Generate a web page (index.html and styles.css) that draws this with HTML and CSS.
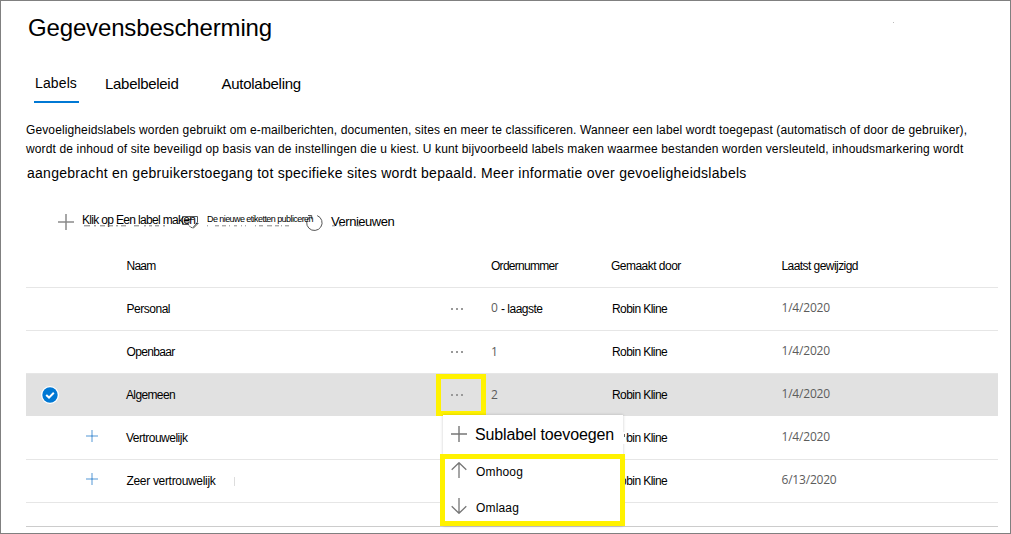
FILE: index.html
```html
<!DOCTYPE html>
<html lang="nl">
<head>
<meta charset="utf-8">
<title>Gegevensbescherming</title>
<link rel="stylesheet" href="styles.css">
</head>
<body>
<main class="page">
  <h1 class="title">Gegevensbescherming</h1>
  <nav class="tabs">
    <a class="tab tab-active">Labels</a>
    <a class="tab tab-policy">Labelbeleid</a>
    <a class="tab tab-auto">Autolabeling</a>
  </nav>
  <section class="intro">
    <p class="intro-line line-one">Gevoeligheidslabels worden gebruikt om e-mailberichten, documenten, sites en meer te classificeren. Wanneer een label wordt toegepast (automatisch of door de gebruiker),</p>
    <p class="intro-line line-two">wordt de inhoud of site beveiligd op basis van de instellingen die u kiest. U kunt bijvoorbeeld labels maken waarmee bestanden worden versleuteld, inhoudsmarkering wordt</p>
    <p class="intro-line line-three">aangebracht en gebruikerstoegang tot specifieke sites wordt bepaald. Meer informatie over gevoeligheidslabels</p>
  </section>
  <div class="toolbar">
    <svg class="tool-icon" width="16" height="16" viewBox="0 0 16 16"><path d="M8 0V16M0 8H16" stroke="#8a8a8a" stroke-width="1.5"/></svg>
    <span class="tool-create">Klik op Een label maken.
      <svg class="residue" width="84" height="2" viewBox="0 0 84 2"><path d="M2 .8H8M12 .8H14M18 .8H23M26 .8H31M34 .8H36M39 .8H44M52 .8H57M62 .8H64M67 .8H70M73 .8H77M81 .8H83" stroke="#777"/></svg>
    </span>
    <svg class="tool-icon" width="17" height="16" viewBox="0 0 17 16"><path d="M7 10.500H.5V2.500H15.500V8M3 5.500H12M3 8H8M7 11.500L9 13.500L10 13.500M10.500 14L15.500 8.500M11 14.500L16.500 9" fill="none" stroke="#555"/></svg>
    <span class="tool-publish">De nieuwe etiketten publiceren
      <svg class="residue" width="84" height="2" viewBox="0 0 84 2"><path d="M0 .8H1M8 .8H12M15 .8H19M22 .8H23M27 .8H30M34 .8H35M38 .8H39M48 .8H49M52 .8H56M60 .8H65M68 .8H72M74 .8H75M78 .8H82" stroke="#888"/></svg>
    </span>
    <svg class="tool-icon" width="17" height="18" viewBox="0 0 17 18"><path d="M11.200 1.600A7.700 7.700 0 1 1 4.200 2.300M2 1.500H5.700V5.200" fill="none" stroke="#555"/></svg>
    <span class="tool-refresh">Vernieuwen
      <svg class="residue" width="52" height="2" viewBox="0 0 52 2"><path d="M1 .8H4M8 .8H12M25 .8H30M43 .8H44" stroke="#888"/></svg>
    </span>
  </div>

  <section class="table">
    <div class="row head">
      <span></span><span></span><span class="t-naam">Naam</span><span></span>
      <span class="t-order">Ordernummer</span><span class="t-maker">Gemaakt door</span><span class="t-mod">Laatst gewijzigd</span>
    </div>
    <div class="row">
      <span></span><span></span><span class="t-personal">Personal</span><span class="dots"><i></i><i></i><i></i></span>
      <span class="order"><b class="num">0</b><span class="t-low">- laagste</span></span><span class="robin">Robin Kline</span><span class="date">1/4/2020</span>
    </div>
    <div class="row">
      <span></span><span></span><span class="t-open">Openbaar</span><span class="dots"><i></i><i></i><i></i></span>
      <span class="order"><b class="num">1</b></span><span class="robin">Robin Kline</span><span class="date">1/4/2020</span>
    </div>
    <div class="row selected">
      <span class="check"><svg width="18" height="18" viewBox="0 0 18 18"><circle cx="9" cy="9" r="9" fill="#fff"/><circle cx="9" cy="9" r="7.700" fill="#0078d4"/><path d="M5.200 9L8 11.600L12.800 6.800" fill="none" stroke="#fff" stroke-width="2"/></svg></span>
      <span></span><span class="t-alg">Algemeen</span><span class="dots"><i></i><i></i><i></i></span>
      <span class="order"><b class="num">2</b></span><span class="robin">Robin Kline</span><span class="date">1/4/2020</span>
    </div>
    <div class="row">
      <span></span><span class="expand"><svg width="12" height="12" viewBox="0 0 12 12"><path d="M6 0V12M0 6H12" stroke="#a9cbea" stroke-width="2"/><path d="M6 5V7" stroke="#69a5dc" stroke-width="2"/></svg></span>
      <span class="t-vert">Vertrouwelijk</span><span></span><span></span><span class="robin">Robin Kline</span><span class="date">1/4/2020</span>
    </div>
    <div class="row">
      <span></span><span class="expand"><svg width="12" height="12" viewBox="0 0 12 12"><path d="M6 0V12M0 6H12" stroke="#a9cbea" stroke-width="2"/><path d="M6 5V7" stroke="#69a5dc" stroke-width="2"/></svg></span>
      <span class="name-cell"><span class="t-zeer">Zeer vertrouwelijk</span><i class="cursor"></i></span><span></span><span></span><span class="robin">Robin Kline</span><span class="date">6/13/2020</span>
    </div>
    <div class="footer-line"></div>
  </section>

  <div class="mark-dots"></div>
  <div class="menu">
    <div class="menu-item menu-add">
      <svg width="16" height="16" viewBox="0 0 16 16"><path d="M8 0V16M0 8H16" stroke="#777" stroke-width="1.400"/></svg>
      <span class="t-sub">Sublabel toevoegen</span>
    </div>
    <div class="menu-marked">
      <div class="menu-item"><svg width="16" height="16" viewBox="0 0 16 16"><path d="M8 16V1M.7 7.700L8 .7L15.300 7.700" fill="none" stroke="#777" stroke-width="1.300"/></svg><span class="t-up">Omhoog</span></div>
      <div class="menu-item"><svg width="16" height="16" viewBox="0 0 16 16"><path d="M8 0V15M.7 8.300L8 15.300L15.300 8.300" fill="none" stroke="#777" stroke-width="1.300"/></svg><span class="t-down">Omlaag</span></div>
    </div>
  </div>
  <i class="patch"></i>
  <i class="speck"></i>
</main>
</body>
</html>
```
FILE: styles.css
```css
* { box-sizing: border-box; }
body { margin: 0; background: #fff; color: #000; font: 12px/16px "Liberation Sans", Arial, sans-serif; }
.page { position: relative; width: 1011px; height: 534px; border: 1px solid #808080; padding: 12px 12px 0 25px; overflow: hidden; white-space: nowrap; }
.title { margin: 0; padding-left: 2px; font-size: 24px; line-height: 30px; font-weight: 400; letter-spacing: -0.15px; }

.tabs { display: flex; margin-top: 30px; padding-left: 8px; height: 30px; font-size: 15px; line-height: 20px; }
.tab { display: block; padding-top: 1px; }
.tab-active { width: 45px; padding: 0 0 0 1px; border-bottom: 2px solid #0078d4; font-size: 14px; letter-spacing: .124px; }
.tab-policy { margin-left: 26px; letter-spacing: -.3px; }
.tab-auto { margin-left: 43px; letter-spacing: -.26px; }

.intro { padding-top: 18px; height: 84px; }
.intro-line { margin: 0; line-height: 19px; }
.line-one { letter-spacing: .117px; }
.line-two { letter-spacing: .139px; }
.line-three { padding: 5px 0 0 1px; font-size: 14px; letter-spacing: .276px; }

.toolbar { display: grid; grid-template-columns: 24px 100px 25px 99px 25px auto; margin-top: 26px; padding-left: 32px; height: 27px; align-items: start; }
.toolbar > span { position: relative; height: 20px; }
.tool-icon { margin-top: 1px; }
.toolbar > .tool-create { margin-top: -1px; letter-spacing: -.67px; }
.tool-publish { font-size: 9px; line-height: 12px; letter-spacing: -.57px; }
.tool-refresh { padding-top: 1px; font-size: 13px; letter-spacing: -.46px; }
.residue { position: absolute; left: 0; top: 12px; }
.tool-create .residue { top: 13px; }

.table { width: 972px; }
.row { display: grid; grid-template-columns: 60px 40.5px 319.5px 45px 120px 170px 1fr; align-items: center; height: 43px; border-bottom: 1px solid #e6e6e6; }
.head { height: 48px; padding-top: 5px; }
.selected { background: #e1e1e1; border-bottom-color: #fff; }
.check { display: flex; padding-left: 15px; }
.expand { display: flex; height: 16px; }
.dots { display: flex; gap: 3px; padding-left: 5px; }
.dots i { width: 2px; height: 2px; background: #999; }
.order { display: flex; }
.num { width: 10px; margin-top: -1px; color: #5c5c5c; font: 400 12px/16px "Open Sans", sans-serif; }
.date { margin-top: -3px; padding-left: .5px; color: #5c5c5c; font-family: "Open Sans", sans-serif; letter-spacing: -.2px; }
.name-cell { display: flex; align-items: center; }
.cursor { width: 1px; height: 9px; margin-left: 19px; background: #ddd; }
.robin { padding-left: 1px; letter-spacing: -.57px; }
.t-naam { letter-spacing: -.75px; }
.t-order { letter-spacing: -.72px; }
.t-maker { letter-spacing: -.52px; }
.t-mod { padding-left: .5px; letter-spacing: -.56px; }
.t-personal { letter-spacing: -.48px; }
.t-open { letter-spacing: -.66px; }
.t-alg { margin-left: -.5px; letter-spacing: -.63px; }
.t-vert { margin-left: -.5px; letter-spacing: -.51px; }
.t-zeer { letter-spacing: -.32px; }
.t-low { letter-spacing: -.5px; }
.footer-line { height: 24px; border-bottom: 1px solid #ccc; }

.mark-dots { position: absolute; left: 435px; top: 373px; width: 50px; height: 42px; border: 5px solid #fff200; }
.menu { position: absolute; left: 442px; top: 414px; width: 180px; height: 111px; background: #fff; box-shadow: 0 0 3px rgba(0,0,0,.2); }
.menu-item { display: flex; align-items: center; gap: 8px; }
.menu-add { height: 39px; padding: 0 0 2px 8px; }
.menu-add .t-sub { padding-top: 3px; }
.menu-marked { width: 185px; height: 72px; margin-left: -3px; border: 5px solid #fff200; padding-left: 6px; background: #fff; }
.menu-marked .menu-item { height: 21px; gap: 9px; }
.menu-marked .menu-item + .menu-item { margin-top: 15px; }
.menu-marked span { padding-top: 4px; }
.t-sub { font-size: 16px; line-height: 20px; letter-spacing: -.14px; }
.t-up, .t-down { letter-spacing: .16px; }
.patch { position: absolute; left: 622px; top: 431px; width: 3px; height: 12px; background: #fff; }
.patch::after { content: ""; position: absolute; left: 1px; top: 2px; width: 1px; height: 3px; background: #666; }
.speck { position: absolute; left: 892px; top: 21px; width: 1px; height: 1px; background: #bbb; }
```
